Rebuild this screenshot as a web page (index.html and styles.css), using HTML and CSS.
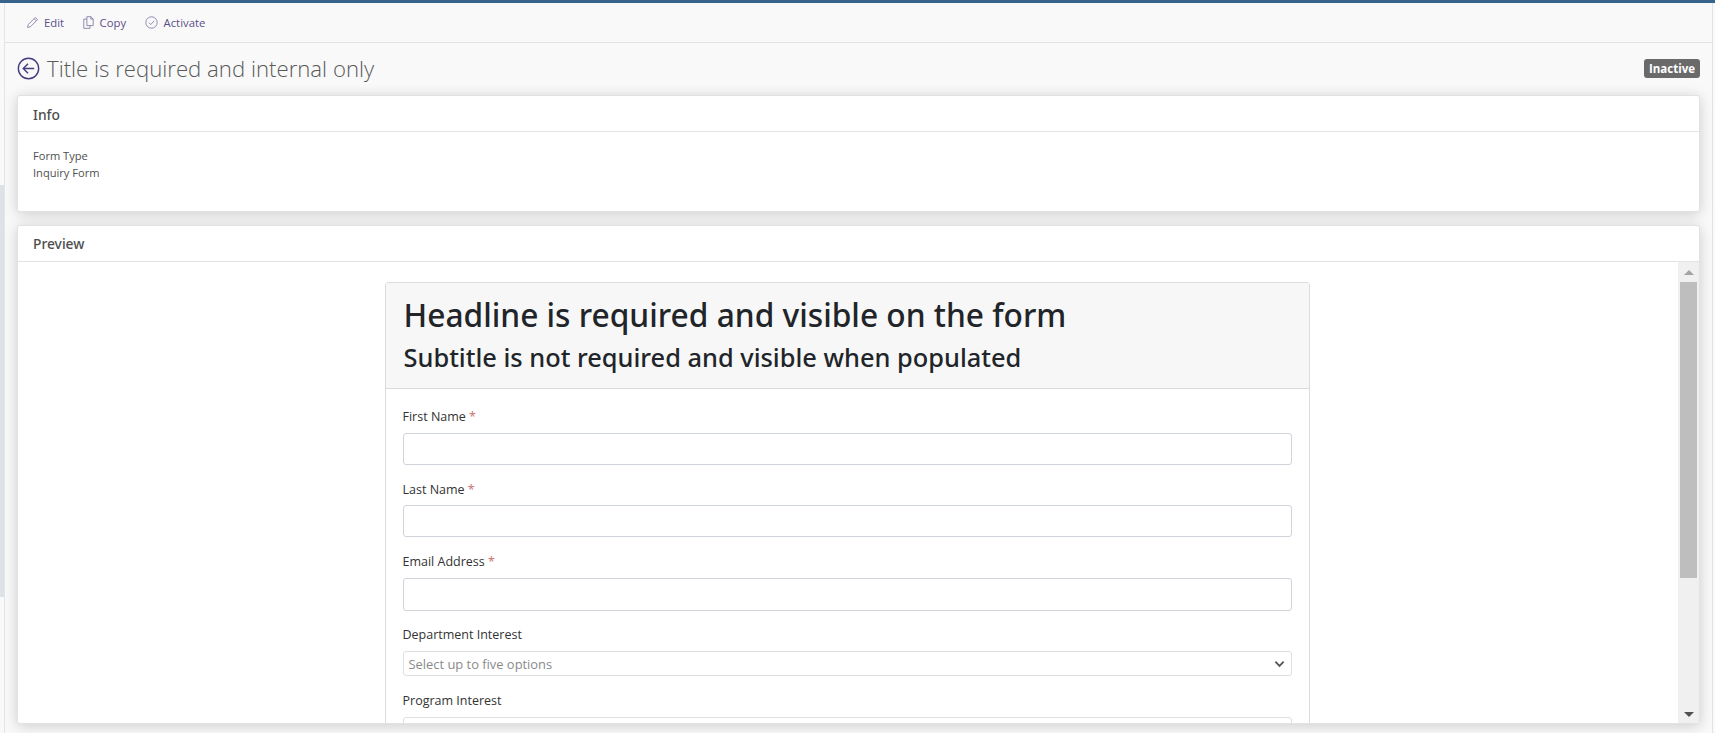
FILE: index.html
```html
<!DOCTYPE html>
<html lang="en">
<head>
    <meta charset="UTF-8">
    <title>Title is required and internal only</title>
    <link rel="stylesheet" href="styles.css">
</head>
<body>
    <div class="topbar"></div>
    <div class="shell">
        <div class="rail"><div class="rail-mark"></div></div>
        <div class="main">
            <div class="toolbar">
                <a class="tool">
                    <svg viewBox="0 0 16 16"><path d="M11.5 1.8l2.7 2.7-8.7 8.7-3.6.9.9-3.6z M10 3.3l2.7 2.7"/></svg>
                    Edit
                </a>
                <a class="tool">
                    <svg viewBox="0 0 16 16"><path d="M6 0.8h4.8l3 3v8H6z M10.8 0.8v3h3 M6 3.8H2.2v11.4h7.6v-3.4"/></svg>
                    Copy
                </a>
                <a class="tool">
                    <svg viewBox="0 0 16 16"><circle cx="8" cy="8" r="7"/><path d="M4.8 8.2l2.3 2.3L11.2 6"/></svg>
                    Activate
                </a>
            </div>

            <div class="title-row">
                <svg class="back" viewBox="0 0 24 24"><circle cx="12" cy="12" r="10.6"/><path d="M18 12H6.5 M11.5 7l-5 5 5 5"/></svg>
                <h1>Title is required and internal only</h1>
                <span class="badge">Inactive</span>
            </div>

            <section class="card info-card">
                <div class="card-head">Info</div>
                <div class="info-body">
                    <div>Form Type</div>
                    <div>Inquiry Form</div>
                </div>
            </section>

            <section class="card preview-card">
                <div class="card-head">Preview</div>
                <div class="preview-body">
                    <div class="preview-frame">
                        <div class="form-card">
                            <div class="form-head">
                                <h2>Headline is required and visible on the form</h2>
                                <h3>Subtitle is not required and visible when populated</h3>
                            </div>
                            <div class="form-body">
                                <div class="field">
                                    <label>First Name <span class="req">*</span></label>
                                    <input type="text">
                                </div>
                                <div class="field field-low">
                                    <label>Last Name <span class="req">*</span></label>
                                    <input type="text">
                                </div>
                                <div class="field field-tight">
                                    <label>Email Address <span class="req">*</span></label>
                                    <input type="text" class="tall">
                                </div>
                                <div class="field">
                                    <label>Department Interest</label>
                                    <div class="multi">
                                        Select up to five options
                                        <svg viewBox="0 0 12 8"><path d="M1.5 1.5L6 6l4.5-4.5"/></svg>
                                    </div>
                                </div>
                                <div class="field">
                                    <label>Program Interest</label>
                                    <div class="multi"></div>
                                </div>
                            </div>
                        </div>
                    </div>
                    <div class="scrollbar">
                        <div class="arrow-up"></div>
                        <div class="thumb"></div>
                        <div class="arrow-down"></div>
                    </div>
                </div>
            </section>
        </div>
    </div>
</body>
</html>
```

FILE: styles.css
```css
html, body {
    height: 100%;
}
body {
    margin: 0;
    overflow: hidden;
    font-family: "Open Sans", "Noto Sans", sans-serif;
    background-color: #f9f9f9;
    color: #333;
    display: flex;
    flex-direction: column;
}
.topbar {
    height: 3px;
    background-color: #36648b;
    flex: none;
}
.shell {
    flex: 1;
    display: flex;
    min-height: 0;
}
.rail {
    width: 4px;
    flex: none;
    padding-top: 182px;
    background-color: #f8f9fa;
    border-right: 1px solid #e3e5e8;
}
.rail-mark {
    height: 412px;
    background-color: #dee2e6;
}
.main {
    flex: 1;
    min-width: 0;
    border-right: 1px solid #e3e3e3;
    margin-right: 2px;
    padding-bottom: 9px;
    display: flex;
    flex-direction: column;
}
.toolbar {
    height: 39px;
    flex: none;
    display: flex;
    align-items: center;
    gap: 17.5px;
    padding-left: 21px;
    border-bottom: 1px solid #e2e2e2;
}
.tool {
    display: flex;
    align-items: center;
    gap: 5px;
    font-size: 11.3px;
    color: #5b4f88;
}
.tool:last-child {
    gap: 6px;
    margin-left: 1px;
}
.tool svg {
    width: 13px;
    height: 13px;
    fill: none;
    stroke: #7d74a3;
    stroke-width: 1;
}
.title-row {
    height: 52px;
    flex: none;
    display: flex;
    align-items: center;
    padding: 0 12px 2px 12px;
    box-sizing: border-box;
}
.back {
    width: 23px;
    height: 23px;
    margin-right: 7px;
    fill: none;
    stroke: #453f80;
    stroke-width: 1.5;
}
h1 {
    flex: 1;
    margin: 0;
    font-size: 22.2px;
    font-weight: 300;
    color: #5a5a5a;
}
.badge {
    background-color: #6a6a6a;
    color: #fff;
    font-size: 11.5px;
    line-height: 15px;
    font-weight: 700;
    padding: 2px 5px;
    border-radius: 3px;
}
.card {
    margin: 0 12px;
    background-color: #fff;
    border: 1px solid #e2e2e2;
    border-radius: 3px;
    box-shadow: 0 2px 14px rgba(0, 0, 0, 0.18);
}
.card-head {
    height: 35px;
    display: flex;
    align-items: center;
    padding-left: 15px;
    font-family: "Noto Sans", "Open Sans", sans-serif;
    font-size: 13.8px;
    font-weight: 500;
    color: #4d4d4d;
    border-bottom: 1px solid #e2e2e2;
}
.info-card {
    height: 117px;
    flex: none;
    box-sizing: border-box;
    margin-bottom: 13px;
}
.info-card .card-head {
    padding-top: 1px;
    height: 34px;
}
.info-body {
    padding: 15px;
    font-size: 11.1px;
    line-height: 17px;
    color: #4f4f4f;
}
.preview-card {
    flex: 1;
    min-height: 0;
    display: flex;
    flex-direction: column;
}
.preview-body {
    flex: 1;
    min-height: 0;
    display: flex;
}
.preview-frame {
    flex: 1;
    overflow: hidden;
    padding: 20px 2px 0 0;
    display: flex;
    justify-content: center;
}
.form-card {
    width: 925px;
    box-sizing: border-box;
    flex: none;
    align-self: flex-start;
    border: 1px solid #dcdcdc;
    border-radius: 3px;
}
.form-head {
    height: 106px;
    box-sizing: border-box;
    padding: 13px 18px 0;
    background-color: #f7f7f7;
    border-bottom: 1px solid #d9d9d9;
    color: #212529;
}
h2 {
    margin: 0;
    font-family: "Noto Sans", "Open Sans", sans-serif;
    font-size: 31.7px;
    line-height: 38px;
    font-weight: 500;
}
h3 {
    margin: 7px 0 0;
    font-family: "Noto Sans", "Open Sans", sans-serif;
    font-size: 25.4px;
    line-height: 32px;
    font-weight: 500;
}
.form-body {
    padding: 18px 17px 0;
}
.field {
    margin-bottom: 15px;
}
.field-tight {
    margin-bottom: 14px;
}
.field label {
    display: block;
    font-size: 12.5px;
    line-height: 20px;
    margin-bottom: 6px;
    color: #333;
}
.field-low label {
    margin-bottom: 5px;
}
.req {
    color: #c9716f;
}
.field input {
    display: block;
    width: 100%;
    height: 32px;
    box-sizing: border-box;
    border: 1px solid #ced4da;
    border-radius: 3px;
    background-color: #fff;
}
.field input.tall {
    height: 33px;
}
.multi {
    height: 25px;
    box-sizing: border-box;
    display: flex;
    align-items: center;
    justify-content: space-between;
    padding: 0 6px 0 5px;
    font-size: 12.9px;
    color: #8a8a8a;
    border: 1px solid #dcdfe3;
    border-radius: 3px;
}
.multi svg {
    width: 11px;
    height: 8px;
    fill: none;
    stroke: #555;
    stroke-width: 2;
}
.scrollbar {
    width: 21px;
    flex: none;
    background-color: #f0f0f0;
    display: flex;
    flex-direction: column;
    align-items: center;
    padding: 8px 0 6px;
    box-sizing: border-box;
}
.arrow-up {
    border-left: 5px solid transparent;
    border-right: 5px solid transparent;
    border-bottom: 5px solid #a3a3a3;
}
.thumb {
    width: 17px;
    height: 296px;
    margin-top: 7px;
    background-color: #bebebe;
}
.arrow-down {
    margin-top: auto;
    border-left: 5px solid transparent;
    border-right: 5px solid transparent;
    border-top: 5px solid #505050;
}
```
